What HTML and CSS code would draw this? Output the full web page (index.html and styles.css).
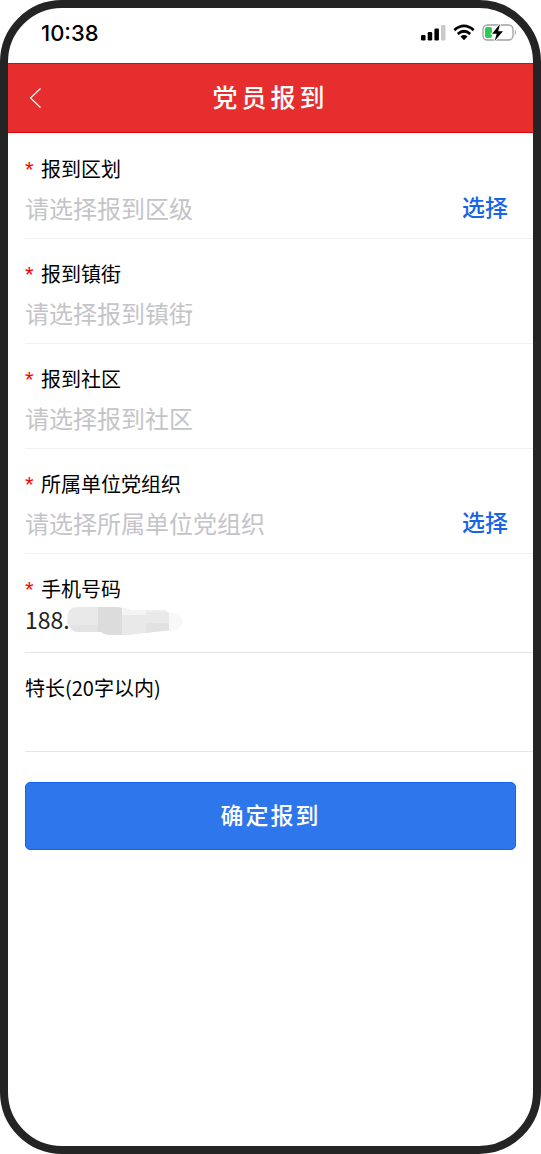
FILE: index.html
```html
<!DOCTYPE html>
<html lang="zh-CN">
<head>
<meta charset="utf-8">
<meta name="viewport" content="width=device-width, initial-scale=1">
<title>党员报到</title>
<link rel="stylesheet" href="styles.css">
</head>
<body>
<div class="phone">
  <div class="status">
    <span class="time">10:38</span>
    <div class="indicators">
      <svg width="25" height="17" viewBox="0 0 25 17" aria-hidden="true">
        <rect x="0" y="11" width="4.5" height="5.5" rx="1.2"/>
        <rect x="6.7" y="8" width="4.5" height="8.5" rx="1.2"/>
        <rect x="13.4" y="4.5" width="4.5" height="12" rx="1.2"/>
        <rect x="20" y="1" width="4.5" height="15.5" rx="1.2" fill="#cacaca"/>
      </svg>
      <svg width="22" height="17" viewBox="0 0 22 17" aria-hidden="true">
        <g fill="none" stroke="#000" stroke-width="2.7">
          <path d="M1.3 6.1Q11-2.200 20.7 6.1"/>
          <path d="M4.8 10Q11 4.500 17.2 10"/>
        </g>
        <path d="M7.5 12.5Q11 9.700 14.5 12.5L11 16.2Z"/>
      </svg>
      <svg width="35" height="17" viewBox="0 0 35 17" aria-hidden="true">
        <rect x="1" y="1" width="30" height="15" rx="4.5" fill="#fff" stroke="#a0a0a0" stroke-width="1.3"/>
        <path d="M32.800 5.500Q35 8.500 32.800 11.500Z" fill="#999"/>
        <rect x="3" y="3" width="7" height="11" rx="2" fill="#2bcc55"/>
        <path d="M18 0L10 9.700H14.700L12.600 17L21 7.300H16.200Z" stroke="#fff" stroke-width="1.8" paint-order="stroke"/>
      </svg>
    </div>
  </div>
  <header class="navbar">
    <button class="back" type="button" aria-label="返回">
      <svg width="14" height="22" viewBox="0 0 14 22" aria-hidden="true"><path d="M12.500 1.500L2.500 11L12.500 20.500" fill="none" stroke="#fff" stroke-width="1.2"/></svg>
    </button>
    <h1 class="title">党员报到</h1>
  </header>
  <form class="form">
    <div class="field">
      <label class="label" for="district"><span class="star">*</span>报到区划</label>
      <div class="control">
        <input class="input" id="district" type="text" placeholder="请选择报到区级">
        <button class="pick" type="button">选择</button>
      </div>
    </div>
    <div class="field">
      <label class="label" for="street"><span class="star">*</span>报到镇街</label>
      <div class="control"><input class="input" id="street" type="text" placeholder="请选择报到镇街"></div>
    </div>
    <div class="field">
      <label class="label" for="community"><span class="star">*</span>报到社区</label>
      <div class="control"><input class="input" id="community" type="text" placeholder="请选择报到社区"></div>
    </div>
    <div class="field">
      <label class="label" for="org"><span class="star">*</span>所属单位党组织</label>
      <div class="control">
        <input class="input" id="org" type="text" placeholder="请选择所属单位党组织">
        <button class="pick" type="button">选择</button>
      </div>
    </div>
    <div class="field compact">
      <label class="label" for="mobile"><span class="star">*</span>手机号码</label>
      <div class="control">
        <input class="input" id="mobile" type="text" value="188.">
        <svg class="mask" width="118" height="32" viewBox="0 0 118 32" aria-hidden="true">
          <clipPath id="smear"><path d="M3 8Q5 2 12 2H50Q60 3 66 5H100Q104 9 110 9Q117 11 117 17Q116 24 108 25L98 26L80 28L64 30H46Q40 30 36 27L14 27Q7 27 5 22L2 18Z"/></clipPath>
          <g clip-path="url(#smear)">
            <rect width="118" height="32" fill="#e9e9e9"/>
            <rect y="20" width="34" height="12" fill="#e3e3e3"/>
            <rect x="33" width="24" height="32" fill="#dcdcdc"/>
            <rect x="57" width="24" height="10" fill="#f4f4f4"/>
            <rect x="81" width="23" height="7" fill="#efefef"/>
            <rect x="81" y="18" width="23" height="14" fill="#e2e2e2"/>
            <rect x="104" width="14" height="32" fill="#f8f8f8"/>
          </g>
        </svg>
      </div>
    </div>
    <div class="field compact">
      <label class="label" for="skill">特长(20字以内)</label>
      <div class="control"><input class="input" id="skill" type="text" maxlength="20"></div>
    </div>
    <button class="submit" type="submit">确定报到</button>
  </form>
</div>
</body>
</html>
```

FILE: styles.css
```css
* {
  box-sizing: border-box;
}

body {
  margin: 0;
  background: #fff;
  color: #000;
  font-family: "Noto Sans CJK SC", sans-serif;
}

button,
input {
  padding: 0;
  border: 0;
  background: none;
  font-family: inherit;
}

.phone {
  min-height: 100vh;
  border: 8px solid #242424;
  border-radius: 62px;
  overflow: hidden;
}

.status {
  display: flex;
  align-items: center;
  justify-content: space-between;
  height: 55px;
  padding: 0 16px 6px 33px;
}

.time {
  font: 500 22px/28px Inter, sans-serif;
}

.indicators {
  display: flex;
  align-items: center;
  gap: 7px;
}

.navbar {
  display: grid;
  grid-template-columns: 56px 1fr 56px;
  align-items: center;
  height: 70px;
  border: solid #e00808;
  border-width: 1px 0;
  background: #e72e2e;
  color: #fff;
}

.back {
  display: flex;
  align-items: center;
  height: 48px;
  padding-left: 20px;
}

.title {
  margin: 0;
  padding-bottom: 4px;
  font-size: 25px;
  font-weight: 500;
  line-height: 36px;
  letter-spacing: 4px;
  text-align: center;
}

.form {
  padding: 1px 0 32px 17px;
}

.field {
  padding: 21px 0 7px;
  border-bottom: 1px solid #f1f1f1;
}

.label {
  display: block;
  font-size: 20px;
  line-height: 28px;
}

.star {
  display: inline-block;
  width: 16px;
  color: #f00;
  font-family: "Liberation Sans", sans-serif;
  font-size: 22px;
  line-height: 20px;
}

.control {
  position: relative;
  display: flex;
  align-items: center;
  height: 48px;
}

.input {
  flex: 1;
  min-width: 0;
  height: 100%;
  color: #222;
  font-size: 24px;
  outline: 0;
}

.input::placeholder {
  color: #c4c4c8;
  opacity: 1;
}

.pick {
  padding: 0 25px 2px;
  color: #1764e8;
  font-size: 23px;
  font-weight: 500;
  line-height: 46px;
}

.compact {
  padding-bottom: 17px;
  border-bottom-color: #e5e5e5;
}

.compact .control {
  height: 32px;
}

.compact .input {
  font-size: 23px;
}

.mask {
  position: absolute;
  top: 2px;
  left: 40px;
}

.submit {
  display: block;
  width: calc(100% - 17px);
  height: 68px;
  margin-top: 30px;
  padding-bottom: 4px;
  border: 1px solid #1265ec;
  border-radius: 5px;
  background: #2e76eb;
  color: #fff;
  font-size: 23px;
  font-weight: 500;
  letter-spacing: 2px;
}
```
